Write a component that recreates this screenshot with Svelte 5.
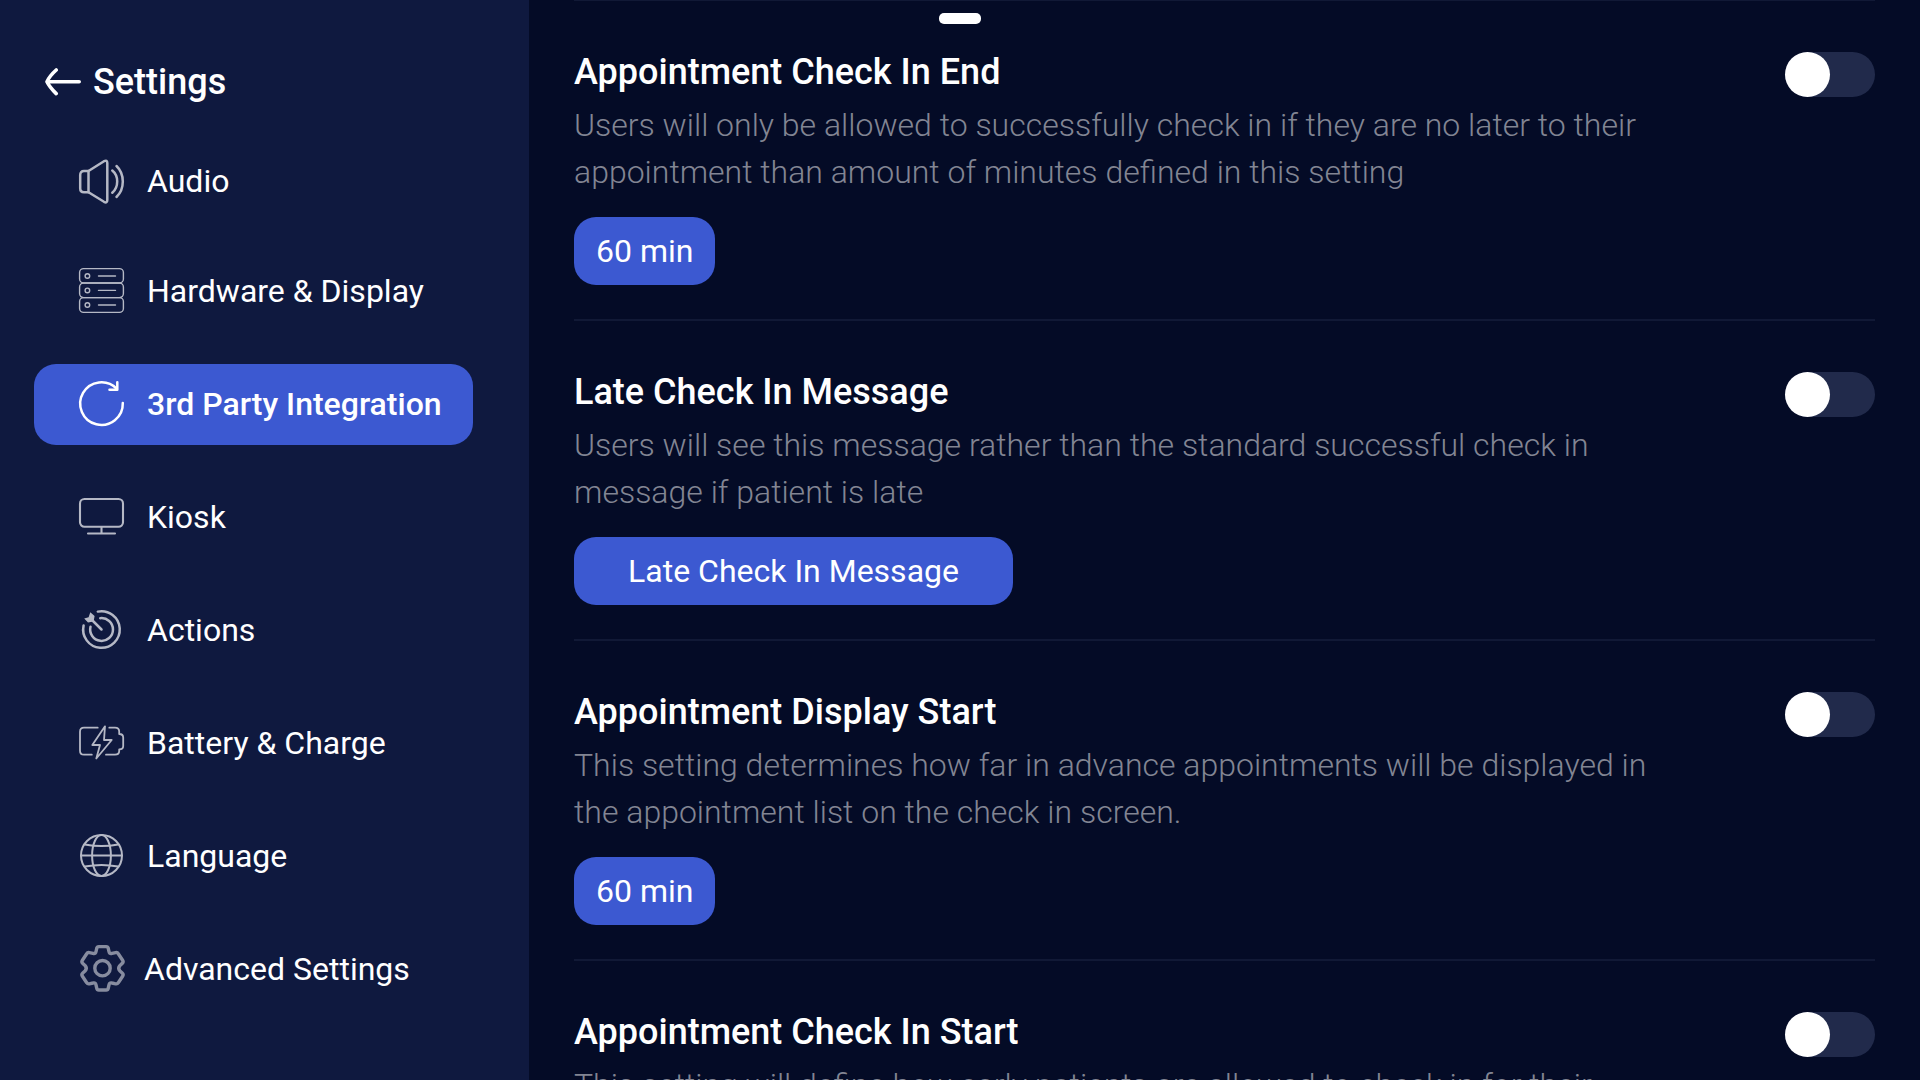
<script lang="ts">
  type NavItem = { id: string; label: string };
  type Setting = {
    id: string;
    title: string;
    description: string;
    action: string;
    wide?: boolean;
  };

  const navItems: NavItem[] = [
    { id: "audio", label: "Audio" },
    { id: "hardware", label: "Hardware & Display" },
    { id: "integration", label: "3rd Party Integration" },
    { id: "kiosk", label: "Kiosk" },
    { id: "actions", label: "Actions" },
    { id: "battery", label: "Battery & Charge" },
    { id: "language", label: "Language" },
    { id: "advanced", label: "Advanced Settings" },
  ];

  const settings: Setting[] = [
    {
      id: "check-in-end",
      title: "Appointment Check In End",
      description:
        "Users will only be allowed to successfully check in if they are no later to their appointment than amount of minutes defined in this setting",
      action: "60 min",
    },
    {
      id: "late-message",
      title: "Late Check In Message",
      description:
        "Users will see this message rather than the standard successful check in message if patient is late",
      action: "Late Check In Message",
      wide: true,
    },
    {
      id: "display-start",
      title: "Appointment Display Start",
      description:
        "This setting determines how far in advance appointments will be displayed in the appointment list on the check in screen.",
      action: "60 min",
    },
    {
      id: "check-in-start",
      title: "Appointment Check In Start",
      description:
        "This setting will define how early patients are allowed to check in for their appointment",
      action: "60 min",
    },
  ];

  let active = $state("integration");
  let enabled: Record<string, boolean> = $state({
    "check-in-end": false,
    "late-message": false,
    "display-start": false,
    "check-in-start": false,
  });
</script>

{#snippet icon(id: string)}
  <svg class="icon" viewBox="0 0 45 45" aria-hidden="true">
    {#if id === "audio"}
      <g stroke-width="2.5">
        <path d="M9.5 12H5Q1.2 12 1.2 16V29.5Q1.2 33.2 5 33.2H9.5Z" />
        <path d="M9.5 12 25 2.2Q28.3 .6 28.3 4V41Q28.3 44.6 25 42.8L9.5 33.2" />
        <path d="M33.3 11.5Q38.2 15.5 38.2 22.5T33.3 33.8M37.5 7Q43.8 13 43.8 22.5T37.5 38" />
      </g>
    {:else if id === "hardware"}
      <g stroke-width="1.4">
        <rect x=".6" y=".6" width="43.8" height="14.4" rx="4" />
        <rect x=".6" y="15" width="43.8" height="14.6" rx="4" />
        <rect x=".6" y="29.6" width="43.8" height="14.8" rx="4" />
        <circle cx="8.4" cy="8" r="2.3" />
        <circle cx="8.4" cy="22.4" r="2.3" />
        <circle cx="8.4" cy="37" r="2.3" />
        <path d="M19.5 8H36.5M19.5 22.4H36.5M19.5 37H36.5" />
      </g>
    {:else if id === "integration"}
      <g stroke-width="2.5">
        <path d="M43.8 22A21.3 21.3 0 1 1 37.8 7.8" />
        <path d="M38.3 1.2V8.7H30.5" />
      </g>
    {:else if id === "kiosk"}
      <g stroke-width="2.1">
        <rect x="1" y="5" width="43" height="27.8" rx="4.5" />
        <path d="M22.5 33V39.3M9 39.5H36" />
      </g>
    {:else if id === "actions"}
      <g stroke-width="2.5">
        <path d="M18.8 4.6A18.3 18.3 0 1 1 4.6 18.5" />
        <path d="M21.2 11.2A11.4 11.4 0 1 1 11.5 19.8" />
        <path d="M22.5 22.5 12 12" />
      </g>
      <path class="fill" d="M5.2 11.6 9.6 10.2 11.3 5.2 15.6 9 14.6 14.4 9 15.6Z" />
    {:else if id === "battery"}
      <g stroke-width="1.8">
        <path d="M18.7 7.7H5Q1 7.7 1 11.7V30.7Q1 34.7 5 34.7H12.8" />
        <path d="M30.3 7.7H36Q40.2 7.7 40.2 11.5V14Q44.2 14 44.2 17.5V26Q44.2 29.4 40.2 29.4V31Q40.2 34.7 36 34.7H27" />
        <path d="M26 6.3 13.3 25H21L17.3 38.5 32.7 20H25Z" />
      </g>
    {:else if id === "language"}
      <g stroke-width="2">
        <circle cx="22.5" cy="22.5" r="20.5" />
        <ellipse cx="22.5" cy="22.5" rx="9.4" ry="20.5" />
        <path d="M2 22.5H43M5.8 11.4Q22.5 14.8 39.2 11.4M5.8 33.6Q22.5 30.2 39.2 33.6" />
      </g>
    {:else}
      <g class="dim" stroke-width="3.4">
        <circle cx="23.5" cy="22.2" r="7.7" />
        <path
          d="M19.8 .6H27.2Q28.9 .6 29.2 2.2L30 5.6Q30.6 8 33 7.4L36.6 6.6Q38.4 6.2 39.3 7.7L43.6 14.2Q44.8 16 43.2 17.4L41 19.4Q38.4 22.2 41 25L43.2 27Q44.8 28.4 43.6 30.2L39.3 36.7Q38.4 38.2 36.6 37.8L33 37Q30.6 36.4 30 38.8L29.2 42.4Q28.9 44 27.2 44H19.8Q18.1 44 17.8 42.4L17 38.8Q16.4 36.4 14 37L10.4 37.8Q8.6 38.2 7.7 36.7L3.4 30.2Q2.2 28.4 3.8 27L6 25Q8.6 22.2 6 19.4L3.8 17.4Q2.2 16 3.4 14.2L7.7 7.7Q8.6 6.2 10.4 6.6L14 7.4Q16.4 8 17 5.6L17.8 2.2Q18.1 .6 19.8 .6Z"
        />
      </g>
    {/if}
  </svg>
{/snippet}

<div class="app">
  <aside class="sidebar">
    <button class="back">
      <svg class="arrow" viewBox="0 0 36 28" aria-hidden="true">
        <path d="M34.2 13.7H2.2M11.2 2Q4.5 8 2 13.7Q4.5 19 11.2 25.6" />
      </svg>
      <span>Settings</span>
    </button>

    <nav aria-label="Settings sections">
      {#each navItems as item (item.id)}
        <button
          class="nav-item {item.id}"
          class:active={active === item.id}
          aria-current={active === item.id ? "page" : undefined}
          onclick={() => (active = item.id)}
        >
          {@render icon(item.id)}
          <span>{item.label}</span>
        </button>
      {/each}
    </nav>
  </aside>

  <main class="content">
    <div class="handle"></div>
    {#each settings as setting (setting.id)}
      <section class="setting">
        <div class="setting-body">
          <h2 id={setting.id}>{setting.title}</h2>
          <p>{setting.description}</p>
          <button class="action" class:wide={setting.wide}>{setting.action}</button>
        </div>
        <input
          class="toggle"
          type="checkbox"
          role="switch"
          aria-labelledby={setting.id}
          bind:checked={enabled[setting.id]}
        />
      </section>
    {/each}
  </main>
</div>

<style>
  :global(body) {
    background: #040b26;
  }

  .app {
    display: flex;
    height: 100vh;
    overflow: hidden;
    color: #fff;
    font-family: Roboto, sans-serif;
    font-size: 32px;
    line-height: 40px;
  }

  button {
    border: none;
    background: none;
    color: inherit;
    font: inherit;
    cursor: pointer;
  }

  .sidebar {
    flex: none;
    box-sizing: border-box;
    width: 529px;
    padding: 62px 56px 0 34px;
    background: #0f193f;
  }

  .back {
    display: flex;
    align-items: center;
    gap: 12px;
    padding: 0 11px;
    font-size: 36px;
    font-weight: 500;
  }

  .arrow {
    width: 36px;
    height: 28px;
    fill: none;
    stroke: #fff;
    stroke-width: 3.6;
    stroke-linecap: round;
    stroke-linejoin: round;
  }

  nav {
    display: flex;
    flex-direction: column;
    gap: 32px;
    margin-top: 43px;
  }

  .nav-item {
    display: flex;
    align-items: center;
    gap: 23px;
    height: 81px;
    padding: 0 22px 2px 45px;
    border-radius: 22px;
    text-align: left;
    white-space: nowrap;
  }

  .nav-item.audio {
    height: 74px;
  }

  .nav-item.advanced {
    gap: 20px;
  }

  .nav-item.active {
    background: #3c59d1;
    font-weight: 500;
  }

  .icon {
    flex: none;
    width: 45px;
    height: 45px;
    overflow: visible;
    fill: none;
    stroke: #b5b8c5;
    stroke-linecap: round;
    stroke-linejoin: round;
  }

  .icon .fill {
    fill: #b5b8c5;
    stroke: none;
  }

  .icon .dim {
    stroke: #878c9f;
  }

  .active .icon {
    stroke: #fff;
  }

  .content {
    flex: 1;
    min-width: 0;
    padding: 0 45px;
    overflow: hidden;
  }

  /* pull-down handle, centred over the whole screen */
  .handle {
    position: fixed;
    top: 13px;
    left: 50%;
    width: 42px;
    height: 11px;
    margin-left: -21px;
    border-radius: 5px;
    background: #fff;
  }

  .setting {
    display: flex;
    align-items: flex-start;
    justify-content: space-between;
    gap: 110px;
    padding: 51px 0 34px;
    border-bottom: 2px solid #111936;
  }

  .setting:first-of-type {
    border-top: 1px solid #111936;
  }

  h2 {
    margin: 0 0 10px;
    font-size: 36px;
    font-weight: 500;
  }

  p {
    margin: 0 0 21px;
    color: #828593;
    font-weight: 300;
    line-height: 47px;
  }

  .action {
    height: 68px;
    padding: 0 22px;
    border-radius: 22px;
    background: #3c59d1;
  }

  .action.wide {
    width: 439px;
  }

  .toggle {
    flex: none;
    width: 90px;
    height: 45px;
    margin: 0;
    border-radius: 23px;
    background: #212a4b;
    appearance: none;
    cursor: pointer;
  }

  .toggle::before {
    content: "";
    display: block;
    width: 45px;
    height: 45px;
    border-radius: 50%;
    background: #fff;
  }

  .toggle:checked {
    background: #3c59d1;
  }

  .toggle:checked::before {
    margin-left: auto;
  }
</style>
